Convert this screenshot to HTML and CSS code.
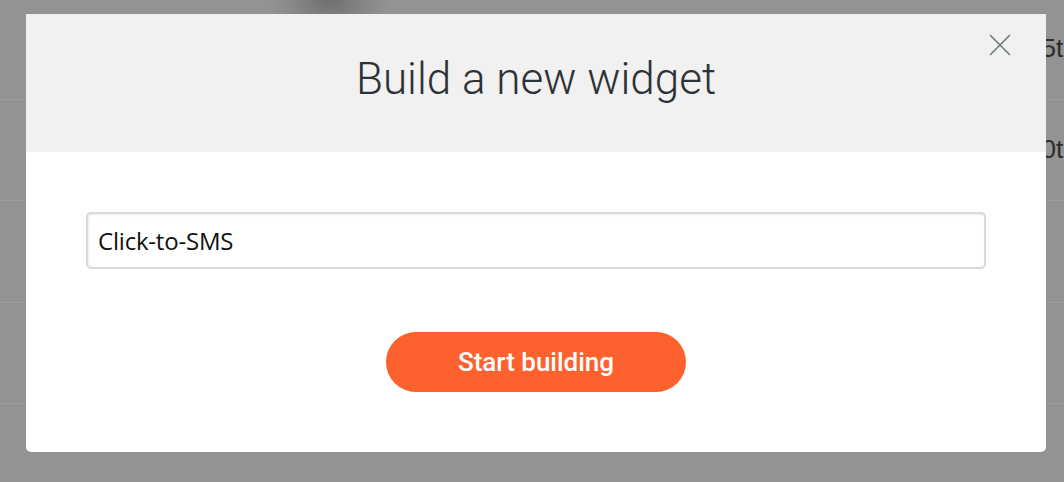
FILE: index.html
```html
<!DOCTYPE html>
<html lang="en">
<head>
    <meta charset="UTF-8">
    <meta name="viewport" content="width=device-width, initial-scale=1.0">
    <title>Build a new widget</title>
    <link rel="stylesheet" href="styles.css">
</head>
<body>
    <div class="page">
        <div class="row"><span class="row-date">15th</span></div>
        <div class="row"><span class="row-date">10th</span></div>
        <div class="row"><span class="row-date"></span></div>
        <div class="row"><span class="row-date"></span></div>
    </div>
    <div class="blur-spot"></div>

    <div class="modal">
        <header class="modal-header">
            <h2>Build a new widget</h2>
            <button class="close" type="button" aria-label="Close">
                <svg width="22" height="22" viewBox="0 0 22 22">
                    <path d="M1 1 L21 21 M21 1 L1 21" stroke="#6e7c7a" stroke-width="1.6" fill="none"/>
                </svg>
            </button>
        </header>
        <div class="modal-body">
            <input type="text" class="name-input" value="Click-to-SMS">
            <button class="start" type="button">Start building</button>
        </div>
    </div>
</body>
</html>
```

FILE: styles.css
```css
* {
    margin: 0;
    padding: 0;
    box-sizing: border-box;
}

body {
    width: 1064px;
    height: 482px;
    overflow: hidden;
    background-color: #939393;
    font-family: 'Roboto', sans-serif;
    position: relative;
}

.page {
    margin-top: -2px;
}

.row {
    height: 101.5px;
    border-bottom: 1px solid #9c9c9c;
    display: flex;
    align-items: center;
    padding-left: 1027px;
    white-space: nowrap;
}

.row-date {
    font-family: 'Liberation Sans', sans-serif;
    font-size: 26px;
    color: #2c2c2c;
}

.blur-spot {
    position: absolute;
    left: 270px;
    top: -40px;
    width: 120px;
    height: 80px;
    border-radius: 50%;
    background: radial-gradient(ellipse at center, rgba(95, 95, 95, 0.7) 0%, rgba(115, 115, 115, 0.35) 45%, rgba(147, 147, 147, 0) 72%);
}

.modal {
    position: absolute;
    top: 14px;
    left: 26px;
    width: 1020px;
    height: 438px;
    background-color: #fff;
    border-radius: 0 0 5px 5px;
    overflow: hidden;
}

.modal-header {
    position: relative;
    height: 138px;
    background-color: #f1f1f1;
    display: flex;
    align-items: center;
    justify-content: center;
}

.modal-header h2 {
    font-family: 'Roboto', sans-serif;
    font-weight: 300;
    font-size: 44px;
    color: #2f3235;
    padding-bottom: 8px;
}

.close {
    position: absolute;
    top: 20px;
    right: 35px;
    width: 22px;
    height: 22px;
    border: none;
    background: none;
    cursor: pointer;
}

.modal-body {
    padding: 60px 60px;
    display: flex;
    flex-direction: column;
    align-items: center;
}

.name-input {
    width: 100%;
    height: 57px;
    padding: 0 10px;
    border: 2px solid #d6dada;
    border-radius: 5px;
    box-shadow: inset 1px 1px 3px rgba(0, 0, 0, 0.08);
    font-family: 'Open Sans', sans-serif;
    font-size: 24px;
    letter-spacing: -0.2px;
    color: #111;
    outline: none;
}

.start {
    margin-top: 63px;
    width: 300px;
    height: 60px;
    border: none;
    border-radius: 30px;
    background-color: #fd612e;
    color: #fff;
    font-family: 'Roboto', sans-serif;
    font-weight: 500;
    font-size: 26px;
    cursor: pointer;
}
```
